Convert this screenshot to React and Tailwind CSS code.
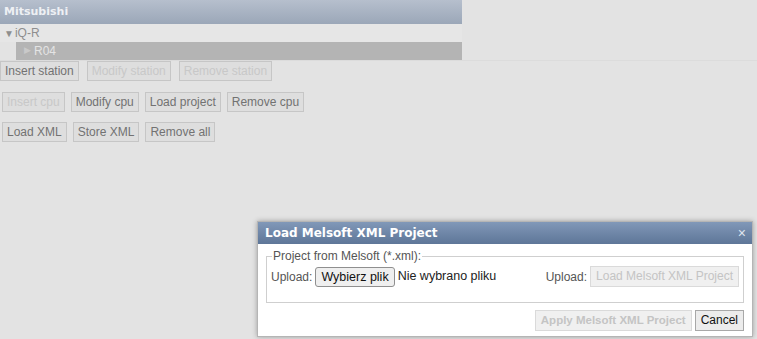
import React from 'react';

function Btn({ children, disabled, className = '' }) {
  return (
    <button
      className={`h-[20px] px-[4px] border border-[#c6c6c6] bg-[#dedede] text-[12px] leading-[18px] ${
        disabled ? 'text-[#c8c8c8]' : 'text-[#727272]'
      } ${className}`}
    >
      {children}
    </button>
  );
}

function DlgBtn({ children, disabled, className = '' }) {
  return (
    <button
      className={`h-[21px] px-[5px] border leading-[19px] ${
        disabled
          ? 'border-[#dadada] bg-[#f0f0f0] text-[#c4c4c4]'
          : 'border-[#a8a8a8] bg-[#ececec] text-[#111]'
      } ${className}`}
    >
      {children}
    </button>
  );
}

export default function App() {
  return (
    <div
      className="relative h-[339px] w-[757px] overflow-hidden bg-[#e3e3e3]"
      style={{ fontFamily: '"Liberation Sans", Arial, sans-serif' }}
    >
      {/* Tree panel */}
      <div className="w-[462px]">
        <div
          className="flex h-[24px] items-center bg-gradient-to-b from-[#b6bfcd] to-[#9ba7b8] pl-[4px] text-[11px] font-bold text-[#eef0f4]"
          style={{ fontFamily: '"DejaVu Sans", Verdana, sans-serif' }}
        >
          Mitsubishi
        </div>
        <div className="flex h-[18px] items-center bg-[#e6e6e6] pl-[4px] text-[12px] text-[#8e8e8e]">
          <span className="mr-[1px] text-[10px]">▼</span>iQ-R
        </div>
        <div className="ml-[16px] flex h-[18px] items-center bg-[#b4b4b4] pl-[8px] text-[12px] text-[#e4e4e4]">
          <span className="mr-[3px] text-[9px] text-[#c9c9c9]">▶</span>R04
        </div>
      </div>
      <div className="h-px w-full bg-[#dcdcdc]" />

      {/* Buttons */}
      <div className="flex gap-[8px]">
        <Btn>Insert station</Btn>
        <Btn disabled>Modify station</Btn>
        <Btn disabled>Remove station</Btn>
      </div>
      <div className="mt-[11px] flex gap-[6px] pl-[2px]">
        <Btn disabled>Insert cpu</Btn>
        <Btn>Modify cpu</Btn>
        <Btn>Load project</Btn>
        <Btn>Remove cpu</Btn>
      </div>
      <div className="mt-[10px] flex gap-[6px] pl-[2px]">
        <Btn>Load XML</Btn>
        <Btn>Store XML</Btn>
        <Btn>Remove all</Btn>
      </div>

      {/* Dialog */}
      <div className="absolute left-[257px] top-[221px] w-[496px] border border-[#b5b5b5] bg-white shadow-[0_0_5px_rgba(0,0,0,0.3)]">
        <div className="flex h-[22px] items-center justify-between bg-gradient-to-b from-[#8198b8] to-[#5e7698] pl-[7px] pr-[6px]">
          <span
            className="text-[12px] font-bold text-white"
            style={{ fontFamily: '"DejaVu Sans", Verdana, sans-serif' }}
          >
            Load Melsoft XML Project
          </span>
          <span className="text-[14px] leading-none text-[#dfe5ee]">×</span>
        </div>
        <div className="px-[8px] pb-[5px] pt-[5px]">
          <fieldset className="h-[54px] border border-[#cfcfcf] px-[4px]">
            <legend className="ml-[1px] px-[1px] text-[12px] leading-[14px] text-[#555]">
              Project from Melsoft (*.xml):
            </legend>
            <div className="mt-[3px] flex items-center justify-between">
              <div className="flex items-center text-[12px]">
                <span className="text-[#555]">Upload:</span>
                <button className="ml-[3px] h-[20px] rounded-[3px] border border-[#8f8f8f] bg-[#efefef] px-[5px] text-[12.5px] leading-[18px] text-[#111]">
                  Wybierz plik
                </button>
                <span className="ml-[3px] text-[12.5px] text-[#222]">Nie wybrano pliku</span>
              </div>
              <div className="flex items-center text-[12px]">
                <span className="text-[#555]">Upload:</span>
                <DlgBtn disabled className="ml-[3px] text-[12px]">
                  Load Melsoft XML Project
                </DlgBtn>
              </div>
            </div>
          </fieldset>
          <div className="mt-[7px] flex justify-end gap-[3px]">
            <DlgBtn disabled className="text-[11.5px] font-bold">
              Apply Melsoft XML Project
            </DlgBtn>
            <DlgBtn className="text-[12px]">Cancel</DlgBtn>
          </div>
        </div>
      </div>
    </div>
  );
}
